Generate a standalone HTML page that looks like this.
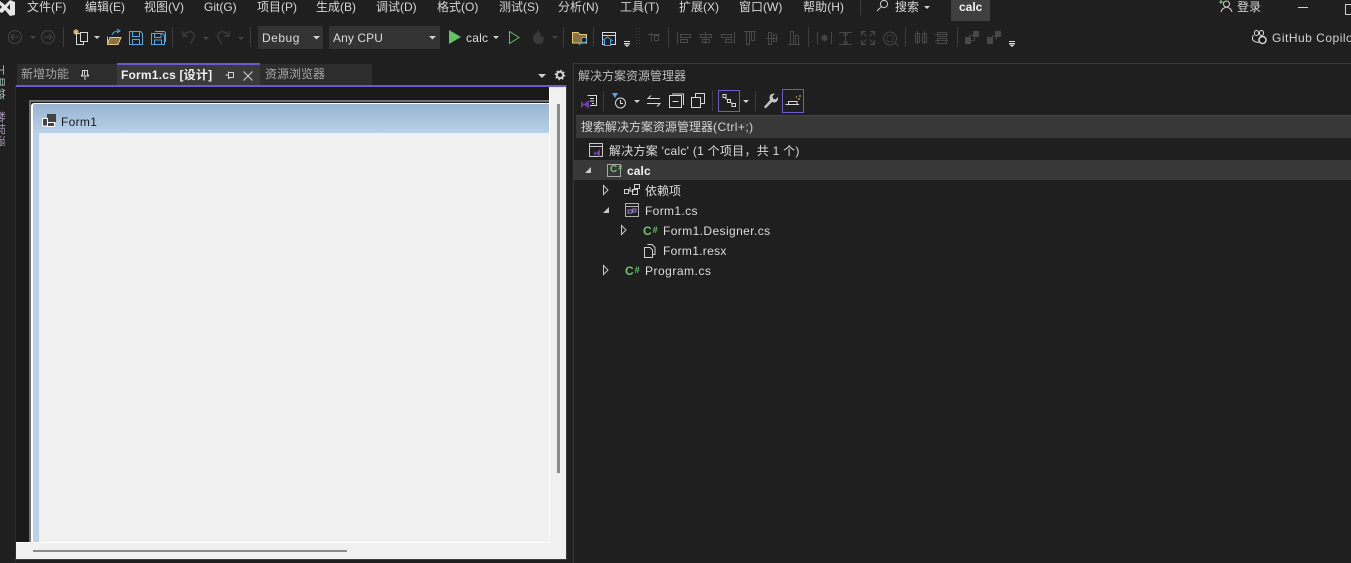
<!DOCTYPE html>
<html><head><meta charset="utf-8">
<style>
html,body{margin:0;padding:0;width:1351px;height:563px;overflow:hidden;background:#1f1f1f}
body{position:relative;font-family:"Liberation Sans","Noto Sans CJK SC",sans-serif;font-size:12px;color:#dcdcdc}
.t{position:absolute;white-space:nowrap;line-height:16px}
.b{position:absolute}
svg{position:absolute;overflow:visible}
.m{top:-1px;color:#d6d6d6}
.cs{color:#6cc56c;font-weight:bold;font-size:12px}
.cs i{font-style:normal;font-size:9px;position:relative;top:-2px;margin-left:1px}
.v{position:absolute;writing-mode:vertical-rl;text-orientation:sideways;font-family:"Noto Sans CJK SC",sans-serif;font-size:12px;line-height:14px;white-space:nowrap;left:-8px;width:14px}
</style></head><body>

<!-- title icon -->
<svg style="left:0;top:0" width="16" height="16"><path d="M0 1L5 5L10 0L15 2V15L10 16L5 10L2 13L0 12V9L2 7L0 5Z" fill="#e6e6e6"/><path d="M10 4L7 7.500L10 10Z" fill="#1f1f1f"/></svg>

<div class="t m" style="left:27px">文件(F)</div>
<div class="t m" style="left:85px">编辑(E)</div>
<div class="t m" style="left:144px">视图(V)</div>
<div class="t m" style="left:204px">Git(G)</div>
<div class="t m" style="left:257px">项目(P)</div>
<div class="t m" style="left:316px">生成(B)</div>
<div class="t m" style="left:376px">调试(D)</div>
<div class="t m" style="left:437px">格式(O)</div>
<div class="t m" style="left:499px">测试(S)</div>
<div class="t m" style="left:558px">分析(N)</div>
<div class="t m" style="left:620px">工具(T)</div>
<div class="t m" style="left:679px">扩展(X)</div>
<div class="t m" style="left:739px">窗口(W)</div>
<div class="t m" style="left:803px;letter-spacing:.1px">帮助(H)</div>
<div class="b" style="left:860px;top:0;width:1px;height:15px;background:#3c3c3c"></div>
<svg style="left:875px;top:0" width="16" height="14" fill="none" stroke="#cfcfcf"><circle cx="9" cy="4" r="3.600"/><path d="M6.300 6.700L2 11"/></svg>
<div class="t m" style="left:895px">搜索</div>
<svg style="left:924px;top:6px" width="6" height="3"><path d="M0 0H6L3 3Z" fill="#d6d6d6"/></svg>
<div class="b" style="left:951px;top:0;width:39px;height:21px;background:#3f3f3f"></div>
<div class="t" style="left:959px;top:-1px;font-weight:bold;color:#f2f2f2">calc</div>
<svg style="left:1220px;top:0" width="14" height="13" fill="none" stroke="#cfcfcf"><circle cx="6.500" cy="4" r="3"/><path d="M1 12C2 8 4.500 8 6.500 7C8.500 8 11 8 12 12"/><path d="M-1 2H3.500M1 0V4" stroke="#7fd47f"/></svg>
<div class="t m" style="left:1237px">登录</div>
<div class="b" style="left:1298px;top:7px;width:10px;height:1px;background:#d0d0d0"></div>
<div class="b" style="left:1345px;top:4px;width:10px;height:9px;border:1px solid #d0d0d0"></div>

<!-- Toolbar (absolute coordinates) -->
<svg style="left:0;top:0" width="1351" height="60" fill="none">
<!-- separators -->
<path d="M63.500 27V47M172.500 27V47M250.500 27V47M563.500 27V47M593.500 27V47M668.500 27V47M808.500 27V47M905.500 27V47M957.500 27V47" stroke="#3c3c3c"/>
<!-- back/forward -->
<g stroke="#454545"><circle cx="15" cy="37" r="6.500"/><path d="M19 37H11M14 34L11 37L14 40"/><circle cx="48" cy="37" r="6.500"/><path d="M44 37H52M49 34L52 37L49 40"/></g>
<path d="M30 36H36L33 39ZM203 37H209L206 40ZM238 37H244L241 40ZM552 36H558L555 39Z" fill="#454545"/>
<path d="M94 36H100L97 39Z" fill="#cfcfcf"/>
<!-- new project -->
<g stroke="#d8d8d8"><rect x="76.500" y="33.500" width="7" height="11"/><rect x="80.500" y="32.500" width="7" height="9" fill="#1f1f1f"/></g>
<path d="M73 32H79M76 29V35M74 30L78 34M78 30L74 34" stroke="#e8c77d"/>
<!-- open -->
<path d="M107.500 36.500V44.500H118L121 37.500H110L107.500 44" stroke="#e8c77d" fill="#8a7343"/>
<path d="M112 35C113 32 116 31 119 31M117 29L120 31L117 33" stroke="#4fa8e8"/>
<!-- save -->
<g stroke="#4fa8e8"><path d="M129.500 31.500H140.500L142.500 33.500V44.500H129.500Z"/><path d="M132.500 32V36.500H139.500V32M132.500 44V39.500H139.500V44"/>
<path d="M153.500 33.500H162.500L164.500 35.500V44.500H151.500V33.500ZM155 31.500H164.500L165.500 33V42"/><path d="M154.500 34V37.500H161V34M154.500 44V40H161.500V44"/></g>
<!-- undo/redo -->
<g stroke="#454545"><path d="M183 31V36H188M184 35.500C186 31 192 30.500 194 34C195 37 193 40 190 44"/><path d="M229 31V36H224M228 35.500C226 31 220 30.500 218 34C217 37 219 40 222 44"/></g>
<!-- folder search -->
<path d="M572.500 32.500H578L580 34.500H586.500V43H572.500Z" fill="#8a7343" stroke="#e8c77d"/><circle cx="584" cy="40" r="2.700" fill="#1f1f1f" stroke="#4fa8e8"/><path d="M582 42L579 45" stroke="#4fa8e8"/>
<!-- window home -->
<rect x="602.500" y="32.500" width="13" height="12" stroke="#d8d8d8"/><path d="M602.500 35.500H615.500" stroke="#d8d8d8"/><path d="M602 41L607.500 37L613 41M604.500 40V45.500H610.500V40" stroke="#4fa8e8" fill="#1f1f1f"/>
<path d="M624 41.500H630M624 43.500H630" stroke="#d8d8d8"/><path d="M624 44.500H630L627 47Z" fill="#d8d8d8"/>
<path d="M636.500 28V47M639.500 28V47" stroke="#3c3c3c" stroke-dasharray="1 2"/>
<!-- alignment -->
<g stroke="#484848">
<path d="M651.500 33V42M648 34.500H660M654.500 35.500H658.500V40.500H654.500Z"/>
<path d="M677.500 32V44M680.500 34.500H690.500V37.500H680.500ZM680.500 39.500H687.500V42.500H680.500Z"/>
<path d="M705.500 32V44M700.500 34.500H711.500V37.500H700.500ZM702.500 39.500H709.500V42.500H702.500Z"/>
<path d="M734.500 32V44M721.500 34.500H731.500V37.500H721.500ZM725.500 39.500H731.500V42.500H725.500Z"/>
<path d="M744 31.500H756M746.500 32V44.500H749.500V32M751.500 32V40.500H754.500V32"/>
<path d="M766 38.500H778M768.500 32.500H771.500V44.500H768.500ZM773.500 34.500H776.500V41.500H773.500Z"/>
<path d="M788 44.500H800M790.500 44V31.500H793.500V44M795.500 44V35.500H798.500V44"/>
<path d="M817.500 32V44M831.500 32V44"/>
<path d="M821 38H828M824.500 34.500V41.500M822 35.500L827 40.500M827 35.500L822 40.500" stroke-width="1.300"/>
<path d="M839 32.500H852M839 44.500H852M845.500 33V44M843 35.500L845.500 33L848 35.500M843 41.500L845.500 44L848 41.500"/>
<path d="M861.500 36V31.500H866M870 31.500H874.500V36M874.500 40V44.500H870M866 44.500H861.500V40M862 32L866.500 36.500M874 32L869.500 36.500M862 44L866.500 39.500M874 44L869.500 39.500"/>
<circle cx="890" cy="38.500" r="6.500"/><rect x="887" y="35.500" width="6" height="6" stroke-dasharray="2 1"/><path d="M895 43L898.500 46"/>
<path d="M917.500 31V44M924.500 31V44M915.500 33.500H919.500V42.500H915.500ZM922.500 33.500H926.500V42.500H922.500Z"/>
<path d="M935 34.500H948M935 40.500H948M937.500 32.500H946.500V36.500H937.500ZM937.500 38.500H946.500V43.500H937.500Z"/>
</g>
<!-- order -->
<path d="M965 37H971V44H965ZM973 31H979V37H973Z" fill="#484848"/><rect x="969.500" y="35.500" width="5" height="5" stroke="#484848"/>
<path d="M987 37H993V44H987ZM995 31H1001V37H995Z" fill="#484848"/><path d="M992 36H996V40" stroke="#484848"/>
<path d="M1009 41.500H1015M1009 43.500H1015" stroke="#d8d8d8"/><path d="M1009 44.500H1015L1012 47Z" fill="#d8d8d8"/>
</svg>
<div class="b" style="left:258px;top:26px;width:65px;height:23px;background:#333"></div>
<div class="t" style="left:262px;top:30px;color:#dcdcdc;letter-spacing:.5px">Debug</div>
<svg style="left:313px;top:36px" width="7" height="4"><path d="M0 0H7L3.500 3.500Z" fill="#cfcfcf"/></svg>
<div class="b" style="left:329px;top:26px;width:111px;height:23px;background:#333"></div>
<div class="t" style="left:333px;top:30px;color:#dcdcdc;letter-spacing:.1px">Any CPU</div>
<svg style="left:429px;top:36px" width="7" height="4"><path d="M0 0H7L3.500 3.500Z" fill="#cfcfcf"/></svg>
<svg style="left:449px;top:30px" width="13" height="14"><path d="M0 0L12 7L0 14Z" fill="#63c163"/></svg>
<div class="t" style="left:466px;top:30px;color:#dcdcdc;letter-spacing:.2px">calc</div>
<svg style="left:493px;top:36px" width="7" height="4"><path d="M0 0H6L3 3Z" fill="#cfcfcf"/></svg>
<svg style="left:509px;top:31px" width="11" height="13"><path d="M.5 .5L10 6.500L.5 12.500Z" fill="none" stroke="#63c163"/></svg>
<svg style="left:530px;top:28px" width="20" height="18"><path d="M7 1C9 5 5 5 3 9C2 14 6 16 9 16C13 16 15 12 13 8C13 9 11 10 11 8C11 5 9 3 7 1Z" fill="#3a3a3a"/></svg>
<svg style="left:1251px;top:29px" width="17" height="16" fill="none" stroke="#d8d8d8"><rect x="3.500" y="1.500" width="4" height="5" rx="2"/><rect x="8.500" y="1.500" width="4" height="5" rx="2"/><path d="M2.500 6C1 8 1 11 3 12C5 13.500 7 13.500 9 13"/><circle cx="11.500" cy="11" r="3.500" stroke-width="1.500" fill="#111"/></svg>
<div class="t" style="left:1272px;top:30px;color:#d2d2d2;letter-spacing:.5px">GitHub Copilot</div>
<div class="b" style="left:573px;top:63px;width:778px;height:1px;background:#3a3a3a"></div>

<!-- left tool strip -->
<div class="b" style="left:15px;top:85px;width:1px;height:478px;background:#2e2e2e"></div>
<div class="v" style="top:64px;color:#9fb5ad">工具箱</div>
<div class="v" style="top:111px;color:#a593ad">数据源</div>

<!-- tabs -->
<div class="b" style="left:17px;top:64px;width:100px;height:21px;background:#2d2d2d"></div>
<div class="t" style="left:21px;top:66px;color:#a6a6a6">新增功能</div>
<svg style="left:81px;top:70px" width="8" height="10"><path d="M1.500 .5H6.500V5H7.500V6H.5V5H1.500ZM3.500 1V5M4 6V10" stroke="#d0d0d0" fill="none"/></svg>
<div class="b" style="left:117px;top:63px;width:143px;height:22px;background:#3a3a3a;border-top:2px solid #6a5acd;box-sizing:border-box"></div>
<div class="t" style="left:121px;top:67px;font-weight:bold;color:#f2f2f2;letter-spacing:.2px">Form1.cs [设计]</div>
<svg style="left:225px;top:71px" width="9" height="8"><path d="M.5 4H3M3.500 .5V7.500H4.500M4 1.500H8.500V6.500H4" stroke="#d0d0d0" fill="none"/></svg>
<svg style="left:243px;top:71px" width="10" height="10"><path d="M.5 .5L9.500 9.500M9.500 .5L.5 9.500" stroke="#c8c8c8" stroke-width="1.200"/></svg>
<div class="b" style="left:260px;top:64px;width:112px;height:21px;background:#2d2d2d"></div>
<div class="t" style="left:265px;top:66px;color:#a6a6a6">资源浏览器</div>
<svg style="left:538px;top:74px" width="8" height="5"><path d="M0 0H8L4 4Z" fill="#d0d0d0"/></svg>
<svg style="left:555px;top:70px" width="10" height="10"><circle cx="5" cy="5" r="3.200" fill="none" stroke="#d0d0d0" stroke-width="2"/><circle cx="5" cy="5" r="4.600" fill="none" stroke="#d0d0d0" stroke-width="1.400" stroke-dasharray="1.500 2.100"/></svg>
<div class="b" style="left:16px;top:85px;width:550px;height:2px;background:#6a5acd"></div>

<!-- Design surface -->
<div class="b" style="left:16px;top:87px;width:550px;height:472px;background:#f0f0f0"></div>
<div class="b" style="left:16px;top:87px;width:533px;height:455px;background:#1a1a1a"></div>
<div class="b" style="left:549px;top:87px;width:1px;height:456px;background:#fff"></div>
<div class="b" style="left:16px;top:542px;width:534px;height:1px;background:#fff"></div>
<div class="b" style="left:29px;top:100px;width:520px;height:2px;background:#6e6e6e"></div>
<div class="b" style="left:29px;top:100px;width:2px;height:442px;background:#6e6e6e"></div>
<div class="b" style="left:31px;top:103px;width:518px;height:439px;background:#fff;border-radius:3px 0 0 0"></div>
<div class="b" style="left:33px;top:104px;width:516px;height:29px;background:linear-gradient(#99b4d1,#b9d1ea);border-radius:2px 0 0 0"></div>
<div class="b" style="left:33px;top:133px;width:6px;height:409px;background:#b9d1ea"></div>
<div class="b" style="left:39px;top:133px;width:510px;height:409px;background:#f0f0f0"></div>
<svg style="left:42px;top:114px" width="14" height="14"><rect x="5" y="0" width="9" height="8" fill="#444"/><rect x=".5" y="4.500" width="5" height="7.500" fill="#444" stroke="#fff"/><rect x="5.500" y="8.500" width="7" height="4" fill="#444" stroke="#fff"/></svg>
<div class="t" style="left:61px;top:114px;color:#1a1a1a;letter-spacing:.3px">Form1</div>
<div class="b" style="left:557px;top:104px;width:3px;height:369px;background:#8a8a8a"></div>
<div class="b" style="left:33px;top:550px;width:314px;height:2px;background:#8a8a8a"></div>
<div class="b" style="left:15px;top:559px;width:552px;height:1px;background:#3e3e3e"></div>
<div class="b" style="left:566px;top:85px;width:1px;height:475px;background:#3e3e3e"></div>

<!-- Solution explorer -->
<div class="b" style="left:573px;top:63px;width:1px;height:500px;background:#3a3a3a"></div>
<div class="t" style="left:578px;top:68px;color:#bdbdbd">解决方案资源管理器</div>
<svg style="left:0;top:0" width="1351" height="120" fill="none">
<path d="M587.500 95.500H596.500V105.500H590M590 98.500H594M590 101H594M592 103.500H594" stroke="#d8d8d8"/>
<path d="M581 101L584 104L589 100V108.500L584 105L581 108Z" fill="#6b3fa8"/>
<path d="M603.500 91V111" stroke="#3c3c3c"/>
<path d="M612 93H618L615 98Z" fill="#4fa8e8"/><circle cx="620.500" cy="103" r="5" stroke="#d8d8d8"/><path d="M620.500 100V103.500H623" stroke="#d8d8d8"/>
</svg>
<svg style="left:634px;top:100px" width="7" height="4"><path d="M0 0H6L3 3Z" fill="#cfcfcf"/></svg>
<svg style="left:647px;top:94px" width="14" height="14" fill="none" stroke="#d8d8d8"><path d="M13 4.500H1L4 1.500M0 9.500H13L10 12.500"/></svg>
<svg style="left:669px;top:93px" width="16" height="16" fill="none" stroke="#d8d8d8"><rect x=".5" y="2.500" width="12" height="12"/><path d="M3 1H14.500V12M3.500 8.500H9.500"/></svg>
<svg style="left:691px;top:93px" width="15" height="15" fill="none" stroke="#d8d8d8"><rect x="4.500" y=".5" width="9" height="10"/><rect x=".5" y="4.500" width="9" height="10" fill="#1f1f1f"/></svg>
<div class="b" style="left:712px;top:91px;width:1px;height:20px;background:#3c3c3c"></div>
<div class="b" style="left:718px;top:90px;width:22px;height:22px;border:1px solid #6a5acd;box-sizing:border-box"></div>
<svg style="left:722px;top:94px" width="14" height="14" fill="none" stroke="#d8d8d8"><rect x="1" y=".5" width="3" height="3"/><rect x="5.500" y="5.500" width="3" height="3"/><rect x="10" y="9.500" width="3.500" height="3"/><path d="M3 4L6 6M8.500 8L10.500 10"/></svg>
<svg style="left:743px;top:100px" width="7" height="4"><path d="M0 0H6L3 3Z" fill="#cfcfcf"/></svg>
<div class="b" style="left:755px;top:91px;width:1px;height:20px;background:#3c3c3c"></div>
<svg style="left:763px;top:93px" width="16" height="16"><path d="M1 14L2.500 15.500L9 9C11 10 13.500 9.500 14.500 7.500C15.200 6.200 15 5 15 4L12.500 6.500L10 5.500L9.500 3L12 .8C10 .3 7.500 1 6.800 3C6.300 4.500 6.500 6 7 7Z" fill="#c4c4c4"/></svg>
<div class="b" style="left:782px;top:89px;width:22px;height:24px;border:1px solid #6a5acd;box-sizing:border-box"></div>
<svg style="left:785px;top:93px" width="18" height="16" fill="none"><path d="M.5 11.500H14M3.500 11V8.500H12V11" stroke="#d8d8d8"/><path d="M13 6H15M11 3.500L12 4.500M15 2V4" stroke="#e8c77d"/></svg>
<div class="b" style="left:576px;top:115px;width:775px;height:23px;background:#383838;border-top:1px solid #444;box-sizing:border-box"></div>
<div class="t" style="left:581px;top:119px;color:#d4d4d4">搜索解决方案资源管理器<span style="letter-spacing:.45px">(Ctrl+;)</span></div>

<svg style="left:589px;top:143px" width="15" height="15" fill="none"><rect x=".5" y=".5" width="13" height="13" stroke="#c8c8c8"/><path d="M.5 3.500H13.500" stroke="#c8c8c8"/><path d="M5 8L7 10L11 6V14L7 11L5 13Z" fill="#6b3fa8"/></svg>
<div class="t" style="left:609px;top:143px;color:#dcdcdc;letter-spacing:.27px">解决方案 'calc' (1 个项目，共 1 个)</div>

<div class="b" style="left:574px;top:160px;width:777px;height:20px;background:#383838"></div>
<svg style="left:585px;top:167px" width="7" height="7"><path d="M6 0V6H0Z" fill="#c8c8c8"/></svg>
<svg style="left:607px;top:164px" width="14" height="13"><rect x=".5" y=".5" width="13" height="12" fill="none" stroke="#a8a8a8"/></svg>
<div class="t cs" style="left:610px;top:162px;font-size:10px">C<i style="font-size:7px">#</i></div>
<div class="t" style="left:627px;top:163px;font-weight:bold;color:#f2f2f2;letter-spacing:.1px">calc</div>

<svg style="left:603px;top:185px" width="6" height="10"><path d="M.5 .5L5 5L.5 9.500Z" fill="none" stroke="#c8c8c8"/></svg>
<svg style="left:624px;top:184px" width="17" height="12" fill="none" stroke="#d0d0d0"><rect x=".5" y="5.500" width="4" height="4"/><rect x="10.500" y=".5" width="5" height="4"/><rect x="8.500" y="5.500" width="5" height="5"/><path d="M4 7H8M6 3V7H10"/></svg>
<div class="t" style="left:645px;top:183px;color:#dcdcdc">依赖项</div>

<svg style="left:603px;top:207px" width="7" height="7"><path d="M6 0V6H0Z" fill="#c8c8c8"/></svg>
<svg style="left:625px;top:203px" width="14" height="14" fill="none"><rect x=".5" y=".5" width="13" height="13" stroke="#b0b0b0"/><path d="M.5 3.500H13.500" stroke="#b0b0b0"/><rect x="3" y="7" width="4" height="3" stroke="#9a7fd0"/><rect x="8" y="6" width="3" height="3" stroke="#9a7fd0"/></svg>
<div class="t" style="left:645px;top:203px;color:#dcdcdc;letter-spacing:.35px">Form1.cs</div>

<svg style="left:621px;top:225px" width="6" height="10"><path d="M.5 .5L5 5L.5 9.500Z" fill="none" stroke="#c8c8c8"/></svg>
<div class="t cs" style="left:643px;top:223px">C<i>#</i></div>
<div class="t" style="left:663px;top:223px;color:#dcdcdc;letter-spacing:.4px">Form1.Designer.cs</div>

<svg style="left:644px;top:244px" width="12" height="14" fill="none" stroke="#d0d0d0"><path d="M3.500 .5H8L11 3.500V10.500H8.500M.5 3.500H6L8.500 6V13.500H.5Z"/></svg>
<div class="t" style="left:663px;top:243px;color:#dcdcdc;letter-spacing:.3px">Form1.resx</div>

<svg style="left:603px;top:265px" width="6" height="10"><path d="M.5 .5L5 5L.5 9.500Z" fill="none" stroke="#c8c8c8"/></svg>
<div class="t cs" style="left:625px;top:263px">C<i>#</i></div>
<div class="t" style="left:645px;top:263px;color:#dcdcdc;letter-spacing:.5px">Program.cs</div>
</body></html>
